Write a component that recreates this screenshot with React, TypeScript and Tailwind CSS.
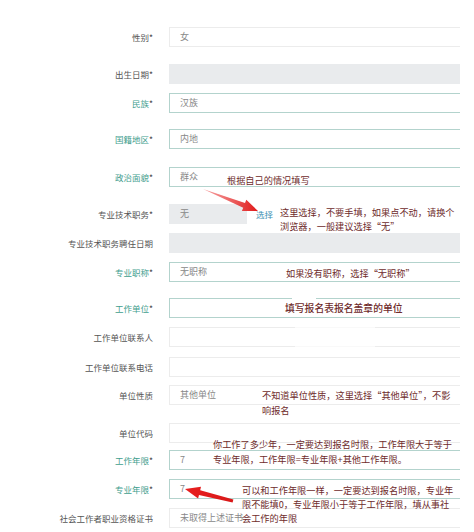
const rows = [
  { label: "性别", star: true, teal: false, kind: "white", value: "女", mt: "mt-0" },
  { label: "出生日期", star: true, teal: false, kind: "gray", value: "", mt: "mt-[17px]" },
  { label: "民族", star: true, teal: true, kind: "teal", value: "汉族", mt: "mt-[9px]" },
  { label: "国籍地区", star: true, teal: true, kind: "teal", value: "内地", mt: "mt-[16px]" },
  { label: "政治面貌", star: true, teal: true, kind: "teal", value: "群众", mt: "mt-[18px]" },
  { label: "专业技术职务", star: true, teal: false, kind: "pick", value: "无", mt: "mt-[17px]" },
  { label: "专业技术职务聘任日期", star: false, teal: false, kind: "gray", value: "", mt: "mt-[9px]" },
  { label: "专业职称", star: true, teal: true, kind: "teal", value: "无职称", mt: "mt-[9px]" },
  { label: "工作单位", star: true, teal: true, kind: "teal", value: "", mt: "mt-[16px]" },
  { label: "工作单位联系人", star: false, teal: false, kind: "white", value: "", mt: "mt-[9px]" },
  { label: "工作单位联系电话", star: false, teal: false, kind: "white", value: "", mt: "mt-[10px]" },
  { label: "单位性质", star: false, teal: false, kind: "white", value: "其他单位", mt: "mt-[8px]" },
  { label: "单位代码", star: false, teal: false, kind: "white", value: "", mt: "mt-[18px]" },
  { label: "工作年限", star: true, teal: true, kind: "teal", value: "7", mt: "mt-[7px]" },
  { label: "专业年限", star: true, teal: true, kind: "teal", value: "7", mt: "mt-[9px]" },
  { label: "社会工作者职业资格证书", star: false, teal: false, kind: "white", value: "未取得上述证书", mt: "mt-[9px]" },
];

function Field({ kind, value }: { kind: string; value: string }) {
  if (kind === "pick") {
    return (
      <div className="ml-[16px] flex h-[20px] items-center">
        <div className="flex h-[20px] w-[78px] items-center bg-[#e9ebed] pl-[11px] text-[9px] text-[#888]">
          {value}
        </div>
        <span className="ml-[9px] text-[8.5px] text-[#3b8fb2]">选择</span>
      </div>
    );
  }
  const box =
    kind === "gray"
      ? "bg-[#e9ebed]"
      : kind === "teal"
        ? "border border-r-0 border-[#b3d3cd] bg-white"
        : "border border-r-0 border-[#ececec] bg-white";
  return (
    <div
      className={`ml-[16px] flex h-[20px] w-[291px] items-center pl-[10px] text-[9px] text-[#888] ${box}`}
    >
      {value}
    </div>
  );
}

function Note({ className, children }: { className: string; children: React.ReactNode }) {
  return (
    <div className={`absolute text-[9.2px] leading-[14px] text-[#6e2b2b] ${className}`}>
      {children}
    </div>
  );
}

export default function App() {
  return (
    <div
      className="relative h-[532px] w-[474px] overflow-hidden bg-white"
      style={{ fontFamily: '"Noto Sans CJK SC", "Noto Sans", sans-serif' }}
    >
      <div className="pt-[27px]">
        {rows.map((r) => (
          <div key={r.label} className={`flex h-[20px] items-center ${r.mt}`}>
            <div
              className={`w-[153px] text-right text-[8.5px] ${r.teal ? "text-[#3f9e8e]" : "text-[#555]"}`}
            >
              {r.label}
              {r.star && <span className="text-[#444]">*</span>}
            </div>
            <Field kind={r.kind} value={r.value} />
          </div>
        ))}
      </div>

      {/* white patches over the 工作单位 field */}
      <div className="absolute left-[292px] top-[296px] h-[4px] w-[24px] bg-white" />
      <div className="absolute left-[295px] top-[318px] h-[30px] w-[80px] bg-white/70" />

      <Note className="left-[227px] top-[173px]">根据自己的情况填写</Note>
      <Note className="left-[280px] top-[205px] leading-[13px]">
        这里选择，不要手填，如果点不动，请换个
        <br />
        浏览器，一般建议选择“无”
      </Note>
      <Note className="left-[286px] top-[266px]">如果没有职称，选择“无职称”</Note>
      <Note className="left-[285px] top-[301px] text-[9.8px] font-medium">
        填写报名表报名盖章的单位
      </Note>
      <Note className="left-[262px] top-[388px] leading-[15px]">
        不知道单位性质，这里选择“其他单位”，不影
        <br />
        响报名
      </Note>
      <Note className="left-[213px] top-[437px] leading-[15px]">
        你工作了多少年，一定要达到报名时限，工作年限大于等于
        <br />
        专业年限，工作年限=专业年限+其他工作年限。
      </Note>
      <Note className="left-[242px] top-[483px]">
        可以和工作年限一样，一定要达到报名时限，专业年
        <br />
        限不能填0，专业年限小于等于工作年限，填从事社
        <br />
        会工作的年限
      </Note>

      <svg className="absolute left-0 top-0" width="474" height="532">
        <defs>
          <linearGradient id="arr1" x1="0" y1="0" x2="1" y2="0">
            <stop offset="0" stopColor="#f06060" stopOpacity="0.6" />
            <stop offset="1" stopColor="#e01818" />
          </linearGradient>
          <linearGradient id="arr2" x1="1" y1="0" x2="0" y2="0">
            <stop offset="0" stopColor="#d81818" />
            <stop offset="1" stopColor="#e82020" />
          </linearGradient>
        </defs>
        <polygon
          points="203,189 245,203.1 246.3,199.8 258,211 241.9,211 243.2,207.7"
          fill="url(#arr1)"
        />
        <polygon
          points="233.4,499.5 200.2,490.2 201,486.8 185,489 198.1,498.4 199,495 232.6,502.5"
          fill="url(#arr2)"
        />
      </svg>
    </div>
  );
}
